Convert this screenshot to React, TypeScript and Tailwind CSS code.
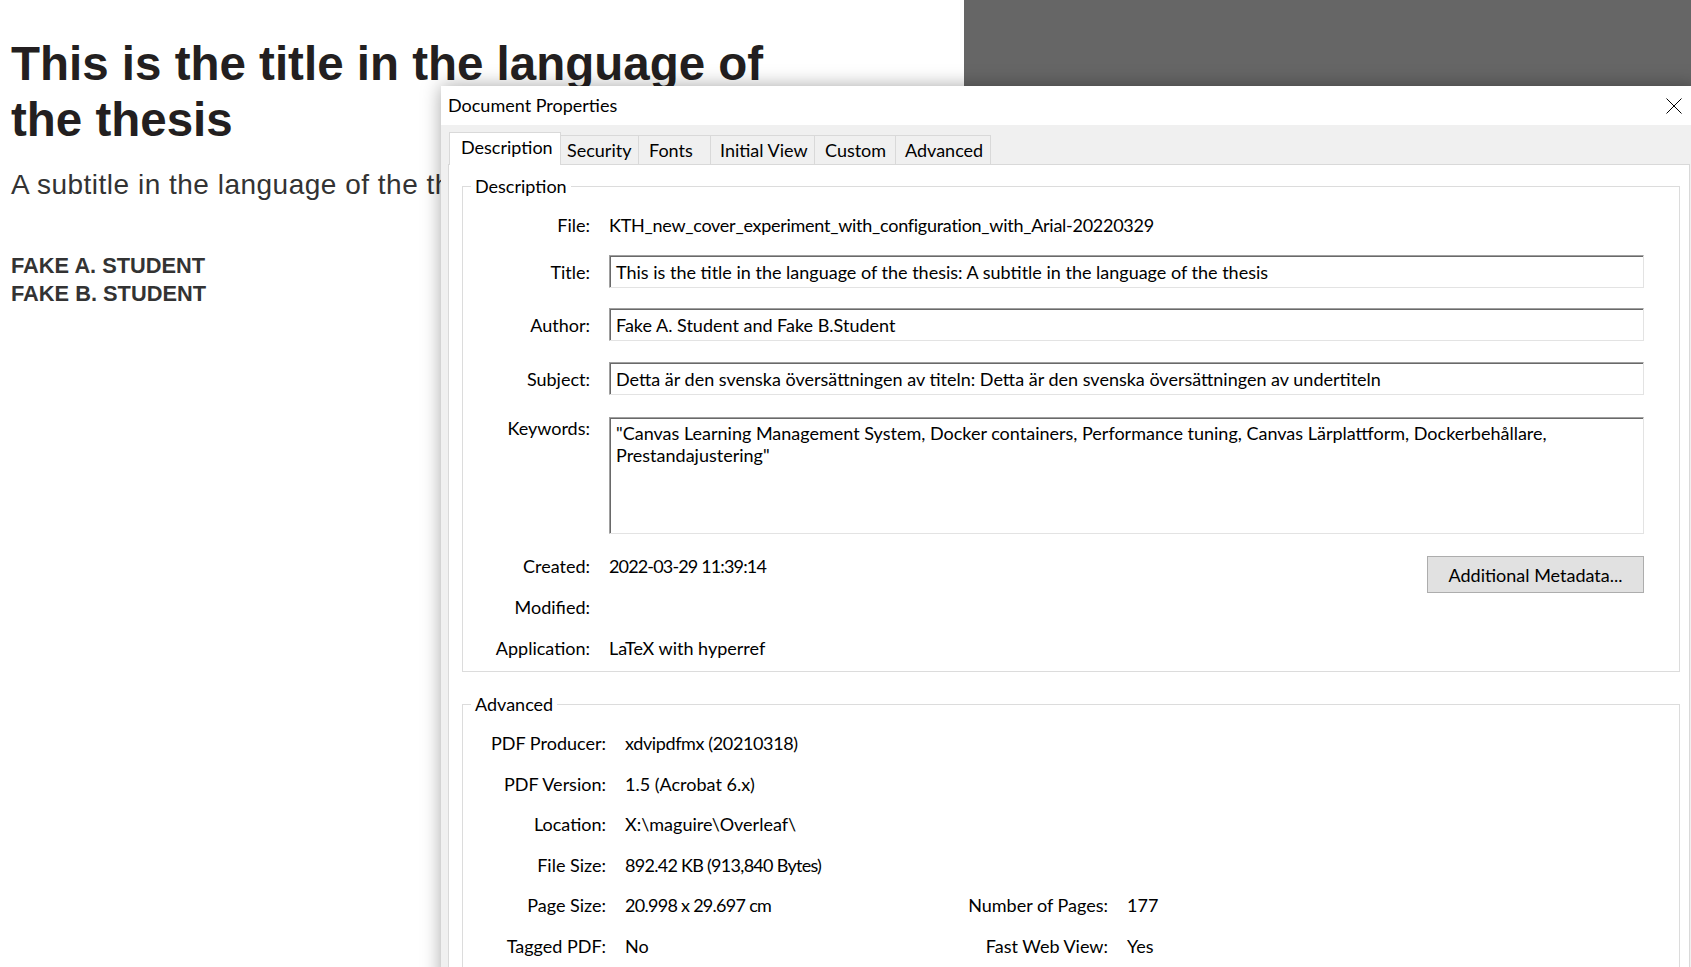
import React from "react";

function Tab({ label, selected, w, pl }: { label: string; selected?: boolean; w: string; pl: string }) {
  if (selected) {
    return (
      <div className={`relative z-10 h-[33px] ${w} ${pl} flex items-center pb-[3px] bg-white border-l border-t border-r border-[#d9d9d9]`}>
        {label}
      </div>
    );
  }
  return (
    <div className={`mt-[3px] h-[29px] ${w} ${pl} flex items-center pt-[1px] bg-[#f0f0f0] border-t border-r border-[#d9d9d9]`}>
      {label}
    </div>
  );
}

function Field({ children }: { children: React.ReactNode }) {
  return (
    <div className="flex-1 h-[33px] ml-[19px] flex items-center pl-[6px] whitespace-nowrap overflow-hidden border border-t-[#a0a0a0] border-l-[#a0a0a0] border-r-[#e3e3e3] border-b-[#e3e3e3] shadow-[inset_1px_1px_0_#696969] bg-white">
      {children}
    </div>
  );
}

function Label({ children }: { children: React.ReactNode }) {
  return <div className="w-[127px] shrink-0 text-right">{children}</div>;
}

function Dialog() {
  return (
    <div className="absolute left-[441px] top-[86px] w-[1256px] h-[900px] bg-[#f0f0f0] shadow-[0_0_18px_rgba(0,0,0,0.35)] font-['Lato','Noto_Sans',sans-serif] text-[18px] text-black">
      <div className="h-[39px] bg-white flex items-center justify-between pl-[7px] pr-[15px]">
        <span>Document Properties</span>
        <svg width="16" height="16" viewBox="0 0 16 16" className="block">
          <path d="M0.5 0.5 L15.5 15.5 M15.5 0.5 L0.5 15.5" stroke="#000" strokeWidth="1" fill="none" />
        </svg>
      </div>
      <div className="px-[7px] pt-[7px]">
        <div className="flex items-start pl-[1px] h-[33px]">
          <Tab label="Description" selected w="w-[112px]" pl="pl-[11px]" />
          <Tab label="Security" w="w-[78px]" pl="pl-[6px]" />
          <Tab label="Fonts" w="w-[72px]" pl="pl-[10px]" />
          <Tab label="Initial View" w="w-[104px]" pl="pl-[9px]" />
          <Tab label="Custom" w="w-[81px]" pl="pl-[10px]" />
          <Tab label="Advanced" w="w-[95px]" pl="pl-[9px]" />
        </div>
        <div className="-mt-px h-[900px] bg-white border border-[#d9d9d9] pl-[13px] pr-[9px] pt-[9px]">
          <fieldset className="border border-[#dcdcdc]">
            <legend className="ml-[8px] px-[4px] leading-[24px]">Description</legend>
            <div className="pt-[15px] pr-[35px] pb-[11px] leading-[24px]">
              <div className="flex items-center h-[24px]">
                <Label>File:</Label>
                <div className="ml-[19px] whitespace-nowrap tracking-[-0.27px]">KTH_new_cover_experiment_with_configuration_with_Arial-20220329</div>
              </div>
              <div className="flex items-center mt-[18px]">
                <Label>Title:</Label>
                <Field>This is the title in the language of the thesis: A subtitle in the language of the thesis</Field>
              </div>
              <div className="flex items-center mt-[20px]">
                <Label>Author:</Label>
                <Field>Fake A. Student and Fake B.Student</Field>
              </div>
              <div className="flex items-center mt-[21px]">
                <Label>Subject:</Label>
                <Field>Detta är den svenska översättningen av titeln: Detta är den svenska översättningen av undertiteln</Field>
              </div>
              <div className="flex items-start mt-[22px]">
                <div className="w-[127px] shrink-0 text-right leading-[22px]">Keywords:</div>
                <div className="flex-1 h-[117px] ml-[19px] pl-[6px] pt-[4px] leading-[22px] whitespace-nowrap overflow-hidden border border-t-[#a0a0a0] border-l-[#a0a0a0] border-r-[#e3e3e3] border-b-[#e3e3e3] shadow-[inset_1px_1px_0_#696969] bg-white">
                  "Canvas Learning Management System, Docker containers, Performance tuning, Canvas Lärplattform, Dockerbehållare,
                  <br />
                  Prestandajustering"
                </div>
              </div>
              <div className="flex items-start mt-[20px]">
                <div className="flex flex-col gap-[17px]">
                  <div className="flex h-[24px]">
                    <Label>Created:</Label>
                    <div className="ml-[19px] whitespace-nowrap tracking-[-0.85px]">2022-03-29 11:39:14</div>
                  </div>
                  <div className="flex h-[24px]">
                    <Label>Modified:</Label>
                  </div>
                  <div className="flex h-[24px]">
                    <Label>Application:</Label>
                    <div className="ml-[19px] whitespace-nowrap">LaTeX with hyperref</div>
                  </div>
                </div>
                <button className="ml-auto mt-[2px] w-[217px] h-[37px] bg-[#e1e1e1] border border-[#adadad] text-black">
                  Additional Metadata...
                </button>
              </div>
            </div>
          </fieldset>
          <fieldset className="mt-[20px] border border-[#dcdcdc]">
            <legend className="ml-[8px] px-[4px] leading-[24px]">Advanced</legend>
            <div className="pt-[15px] pb-[20px] grid grid-cols-[143px_260px_204px_auto] gap-x-[19px] gap-y-[16.5px] leading-[24px] whitespace-nowrap">
              <div className="text-right">PDF Producer:</div>
              <div className="tracking-[-0.38px]">xdvipdfmx (20210318)</div>
              <div />
              <div />
              <div className="text-right">PDF Version:</div>
              <div>1.5 (Acrobat 6.x)</div>
              <div />
              <div />
              <div className="text-right">Location:</div>
              <div>X:\maguire\Overleaf\</div>
              <div />
              <div />
              <div className="text-right">File Size:</div>
              <div className="tracking-[-0.72px]">892.42 KB (913,840 Bytes)</div>
              <div />
              <div />
              <div className="text-right">Page Size:</div>
              <div className="tracking-[-0.72px]">20.998 x 29.697 cm</div>
              <div className="text-right">Number of Pages:</div>
              <div>177</div>
              <div className="text-right">Tagged PDF:</div>
              <div>No</div>
              <div className="text-right">Fast Web View:</div>
              <div>Yes</div>
            </div>
          </fieldset>
        </div>
      </div>
    </div>
  );
}

export default function App() {
  return (
    <div className="relative w-[1691px] h-[967px] overflow-hidden bg-white">
      <div className="flex h-full">
        <div className="w-[964px] h-full bg-white pl-[11px] pt-[36px] font-['Liberation_Sans',Arial,sans-serif] whitespace-nowrap">
          <h1 className="text-[47.5px] leading-[56px] font-bold text-[#231f20]">
            This is the title in the language of
            <br />
            the thesis
          </h1>
          <p className="mt-[22px] text-[28px] leading-[30px] tracking-[0.5px] text-[#333333]">A subtitle in the language of the thesis</p>
          <div className="mt-[52px] text-[21.8px] leading-[28px] font-bold text-[#333333]">
            <div>FAKE A. STUDENT</div>
            <div>FAKE B. STUDENT</div>
          </div>
        </div>
        <div className="flex-1 h-full bg-[#666666]" />
      </div>
      <Dialog />
    </div>
  );
}
